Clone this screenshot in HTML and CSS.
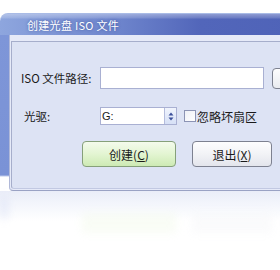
FILE: index.html
```html
<!DOCTYPE html>
<html lang="zh-CN">
<head>
    <meta charset="UTF-8">
    <meta name="viewport" content="width=device-width, initial-scale=1.0">
    <title>创建光盘 ISO 文件</title>
    <link rel="stylesheet" href="styles.css">
</head>
<body>
    <div class="window">
        <div class="titlebar">
            <span class="title">创建光盘 ISO 文件</span>
        </div>
        <div class="frame">
            <div class="panel">
                <div class="client">
                    <div class="row row-path">
                        <label class="label" for="isoPath">ISO 文件路径:</label>
                        <input type="text" id="isoPath" class="field">
                        <button type="button" class="browse" aria-label="浏览"></button>
                    </div>
                    <div class="row row-drive">
                        <label class="label label-drive" for="drive">光驱:</label>
                        <div class="select" id="drive">
                            <span class="select-value">G:</span>
                            <span class="spin">
                                <svg width="6" height="9" viewBox="0 0 6 9">
                                    <path d="M3 0.5 L5.5 3.5 H0.5 Z" fill="#3a4f9a"/>
                                    <path d="M3 8.5 L5.5 5.5 H0.5 Z" fill="#3a4f9a"/>
                                </svg>
                            </span>
                        </div>
                        <span class="checkbox"></span>
                        <span class="check-label">忽略坏扇区</span>
                    </div>
                    <div class="row row-buttons">
                        <button type="button" class="btn btn-create">创建(<u>C</u>)</button>
                        <button type="button" class="btn btn-exit">退出(<u>X</u>)</button>
                    </div>
                </div>
            </div>
        </div>
    </div>
    <div class="reflection">
        <div class="ghost ghost-frame"></div>
        <div class="ghost ghost-create"></div>
        <div class="ghost ghost-exit"></div>
    </div>
</body>
</html>
```

FILE: styles.css
```css
body {
    margin: 0;
    padding: 0;
    background: #fff;
    width: 280px;
    height: 270px;
    overflow: hidden;
    font-family: "Noto Sans CJK SC", "DejaVu Sans", sans-serif;
    font-size: 12px;
    color: #1a1a1a;
}
.window {
    margin-top: 13px;
    width: 300px;
}
.titlebar {
    height: 22px;
    border-radius: 8px 0 0 0;
    background:
        linear-gradient(to bottom, rgba(255,255,255,0.35) 0, rgba(255,255,255,0.15) 4px, rgba(255,255,255,0) 5px),
        linear-gradient(to right, #8ea6de 0, #6d84cc 120px, #5266ba 200px, #4f63b8 100%);
    border-top: 1px solid #a9bbe6;
    box-sizing: border-box;
    display: flex;
    align-items: center;
    padding-left: 27px;
}
.title {
    color: #fff;
    font-size: 11px;
    letter-spacing: 0.3px;
    text-shadow: 0 0 3px rgba(40, 60, 140, 0.7);
}
.frame {
    padding-left: 9px;
    background: linear-gradient(to bottom, #7e96d8 0, #7a92d6 140px, rgba(255,255,255,0) 142px);
}
.panel {
    background: #e6eaf8;
    border-left: 1px solid #b0b8d8;
    border-bottom: 1px solid #9aa2c4;
    border-radius: 0 0 0 4px;
    padding: 6px 0 1px 1px;
}
.client {
    background: #dde3f4;
    border-top: 1px solid #a6aecb;
    border-left: 1px solid #a6aecb;
    border-bottom: 1px solid #c2c9e2;
    border-radius: 0 0 0 3px;
    padding: 25px 0 21px 0;
}
.row {
    display: flex;
    align-items: center;
}
.row > * {
    flex: none;
}
.row-path {
    height: 22px;
}
.label {
    width: 88px;
    padding-left: 9px;
    box-sizing: border-box;
    white-space: nowrap;
    font-size: 11.5px;
}
.label-drive {
    padding-left: 12px;
}
.field {
    width: 164px;
    height: 22px;
    box-sizing: border-box;
    margin: 0;
    border: 1px solid #a9b0d2;
    background: #fff;
    padding: 0 2px;
    font: inherit;
}
.browse {
    margin-left: 8px;
    width: 30px;
    height: 21px;
    box-sizing: border-box;
    border: 1px solid #7d8190;
    border-radius: 4px;
    background: linear-gradient(to bottom, #fdfdfe, #e9ebf0);
    padding: 0;
}
.row-drive {
    margin-top: 18px;
    height: 18px;
}
.select {
    width: 77px;
    height: 18px;
    box-sizing: border-box;
    border: 1px solid #a9b0d2;
    background: #fff;
    display: flex;
    align-items: center;
}
.select-value {
    flex: 1;
    padding-left: 1px;
    font-family: "Liberation Sans", Arial, sans-serif;
    font-size: 11px;
}
.spin {
    width: 12px;
    height: 16px;
    box-sizing: border-box;
    border-left: 1px solid #b4bcdc;
    background: linear-gradient(to bottom, #f0f4fd, #d6e0f6);
    display: flex;
    align-items: center;
    justify-content: center;
}
.checkbox {
    margin-left: 7px;
    width: 12px;
    height: 12px;
    box-sizing: border-box;
    border: 1px solid #8c94b4;
    background: linear-gradient(to bottom right, #eef0f6, #fff);
}
.check-label {
    margin-left: 1px;
    white-space: nowrap;
}
.row-buttons {
    margin-top: 16px;
    height: 26px;
}
.btn {
    height: 26px;
    box-sizing: border-box;
    border-radius: 4px;
    font: inherit;
    color: #1a1a1a;
    padding: 0;
    margin: 0;
}
.btn u {
    text-underline-offset: 1px;
}
.btn-create {
    margin-left: 70px;
    width: 94px;
    border: 1px solid #86a07a;
    background: linear-gradient(to bottom, #f4fbec 0, #e3f5d2 50%, #cdeab4 100%);
}
.btn-exit {
    margin-left: 16px;
    width: 80px;
    border: 1px solid #7d8190;
    background: linear-gradient(to bottom, #fdfdfe 0, #f2f3f6 50%, #e3e5ec 100%);
}
.reflection {
    position: relative;
    height: 60px;
    background: linear-gradient(to bottom, #eaedf8 0, #f4f6fc 14px, rgba(255,255,255,0) 30px);
}
.ghost {
    position: absolute;
    filter: blur(4px);
}
.ghost-frame {
    left: 0;
    top: 6px;
    width: 8px;
    height: 22px;
    background: #c9d3f0;
    opacity: 0.35;
}
.ghost-create {
    left: 82px;
    top: 22px;
    width: 94px;
    height: 20px;
    background: #eef8e4;
    opacity: 0.35;
}
.ghost-exit {
    left: 192px;
    top: 22px;
    width: 80px;
    height: 20px;
    background: #f2f3f6;
    opacity: 0.35;
}
```
